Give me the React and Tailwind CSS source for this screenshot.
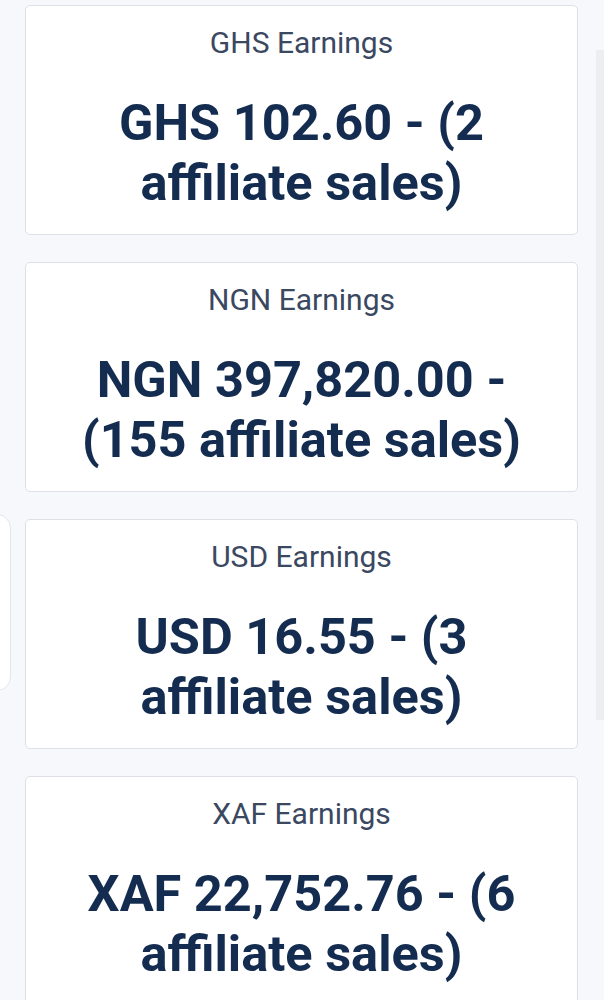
const earnings = [
  { code: 'GHS', amount: '102.60', sales: 2 },
  { code: 'NGN', amount: '397,820.00', sales: 155 },
  { code: 'USD', amount: '16.55', sales: 3 },
  { code: 'XAF', amount: '22,752.76', sales: 6 },
];

export default function App() {
  return (
    <div
      className="relative min-h-screen overflow-hidden bg-[#f7f8fc] pl-[25px] pr-[26px] pt-[5px]"
      style={{ fontFamily: 'Roboto, "Noto Sans", sans-serif' }}
    >
      {/* panel peeking in from the left */}
      <div className="absolute left-[-20px] top-[514px] h-[177px] w-[31px] rounded-r-[14px] border border-[#e2e5ea] bg-white" />
      {/* scrollbar */}
      <div className="absolute right-0 top-[50px] h-[670px] w-[8px] bg-[#eceef2]" />

      <div className="flex flex-col gap-[27px]">
        {earnings.map(e => (
          <div
            key={e.code}
            className="h-[230px] rounded-[5px] border border-[#dde1e7] bg-white px-[30px] pt-[19px] text-center"
          >
            <p className="text-[30px] leading-[36px] text-[#3a4861]">{e.code} Earnings</p>
            <p className="mt-[32px] text-[50.5px] font-bold leading-[60px] text-[#142c4f]">
              {e.code} {e.amount} - ({e.sales} affiliate sales)
            </p>
          </div>
        ))}
      </div>
    </div>
  );
}
